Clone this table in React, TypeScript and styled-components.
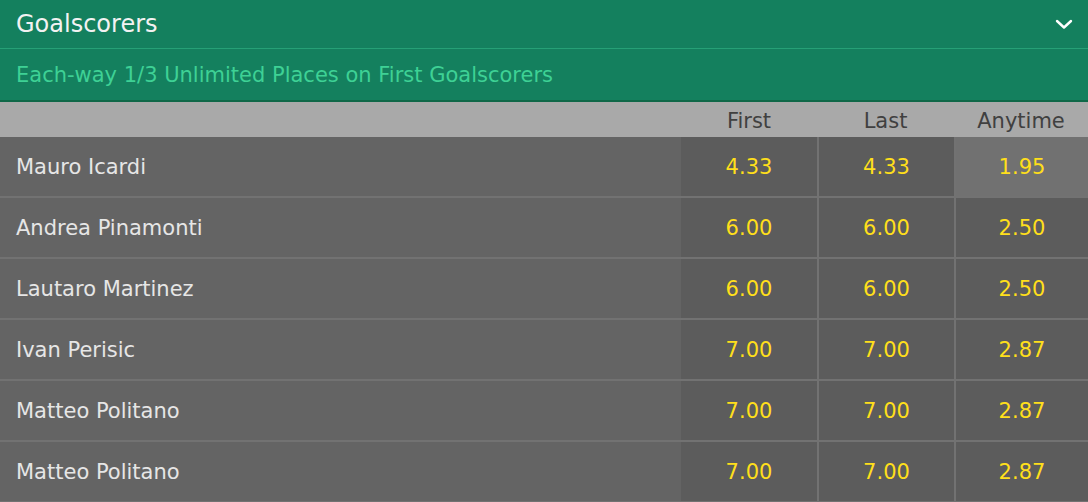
import React from "react";
import styled, { createGlobalStyle } from "styled-components";

const Global = createGlobalStyle`
  html, body { margin: 0; padding: 0; background: #5c5c5c; }
  body { font-family: Tahoma, "DejaVu Sans", sans-serif; }
`;

const COLS = "1fr 136px 137px 134px";

const Panel = styled.div`
  width: 1088px;
  display: flex;
  flex-direction: column;
`;

const TitleBar = styled.div`
  height: 48px;
  background: #14805e;
  border-bottom: 1px solid #26a076;
  display: flex;
  align-items: center;
  justify-content: space-between;
  padding: 0 15px 0 16px;
`;

const Title = styled.div`
  color: #f2f2f2;
  font-size: 24px;
  line-height: 1;
`;

const SubBar = styled.div`
  height: 51px;
  background: #14805e;
  border-bottom: 2px solid #0f6848;
  display: flex;
  align-items: center;
  padding: 2px 16px 0;
  box-sizing: border-box;
  height: 53px;
`;

const SubText = styled.div`
  color: #3ed195;
  font-size: 21px;
  line-height: 1;
`;

const Row = styled.div<{ $head?: boolean }>`
  display: grid;
  grid-template-columns: ${COLS};
  height: ${(p) => (p.$head ? "35px" : "59px")};
  background: ${(p) => (p.$head ? "#a9a9a9" : "#646464")};
  border-bottom: ${(p) => (p.$head ? "none" : "2px solid #727272")};
`;

const NameCell = styled.div`
  display: flex;
  align-items: center;
  padding: 1px 0 0 16px;
  color: #e6e6e6;
  font-size: 21px;
`;

const HeadCell = styled.div`
  display: flex;
  align-items: center;
  justify-content: center;
  color: #404040;
  font-size: 21px;
  padding-top: 2px;
`;

const OddsCell = styled.div<{ $divider?: boolean; $active?: boolean }>`
  display: flex;
  align-items: center;
  justify-content: center;
  padding-top: 1px;
  background: ${(p) => (p.$active ? "#717171" : "#5c5c5c")};
  border-left: ${(p) => (p.$divider ? "2px solid #727272" : "none")};
  color: #ffdf1b;
  font-size: 21px;
`;

const Chevron = () => (
  <svg width="18" height="12" viewBox="0 0 18 12" fill="none">
    <path d="M2 3 L9 9.5 L16 3" stroke="#ffffff" strokeWidth="2.4" strokeLinecap="round" strokeLinejoin="round" />
  </svg>
);

const rows: [string, string, string, string][] = [
  ["Mauro Icardi", "4.33", "4.33", "1.95"],
  ["Andrea Pinamonti", "6.00", "6.00", "2.50"],
  ["Lautaro Martinez", "6.00", "6.00", "2.50"],
  ["Ivan Perisic", "7.00", "7.00", "2.87"],
  ["Matteo Politano", "7.00", "7.00", "2.87"],
  ["Matteo Politano", "7.00", "7.00", "2.87"],
];

export default function App() {
  return (
    <Panel>
      <Global />
      <TitleBar>
        <Title>Goalscorers</Title>
        <Chevron />
      </TitleBar>
      <SubBar>
        <SubText>Each-way 1/3 Unlimited Places on First Goalscorers</SubText>
      </SubBar>
      <Row $head>
        <div />
        <HeadCell>First</HeadCell>
        <HeadCell>Last</HeadCell>
        <HeadCell>Anytime</HeadCell>
      </Row>
      {rows.map((r, i) => (
        <Row key={i}>
          <NameCell>{r[0]}</NameCell>
          <OddsCell>{r[1]}</OddsCell>
          <OddsCell $divider>{r[2]}</OddsCell>
          <OddsCell $divider $active={i === 0}>{r[3]}</OddsCell>
        </Row>
      ))}
    </Panel>
  );
}
